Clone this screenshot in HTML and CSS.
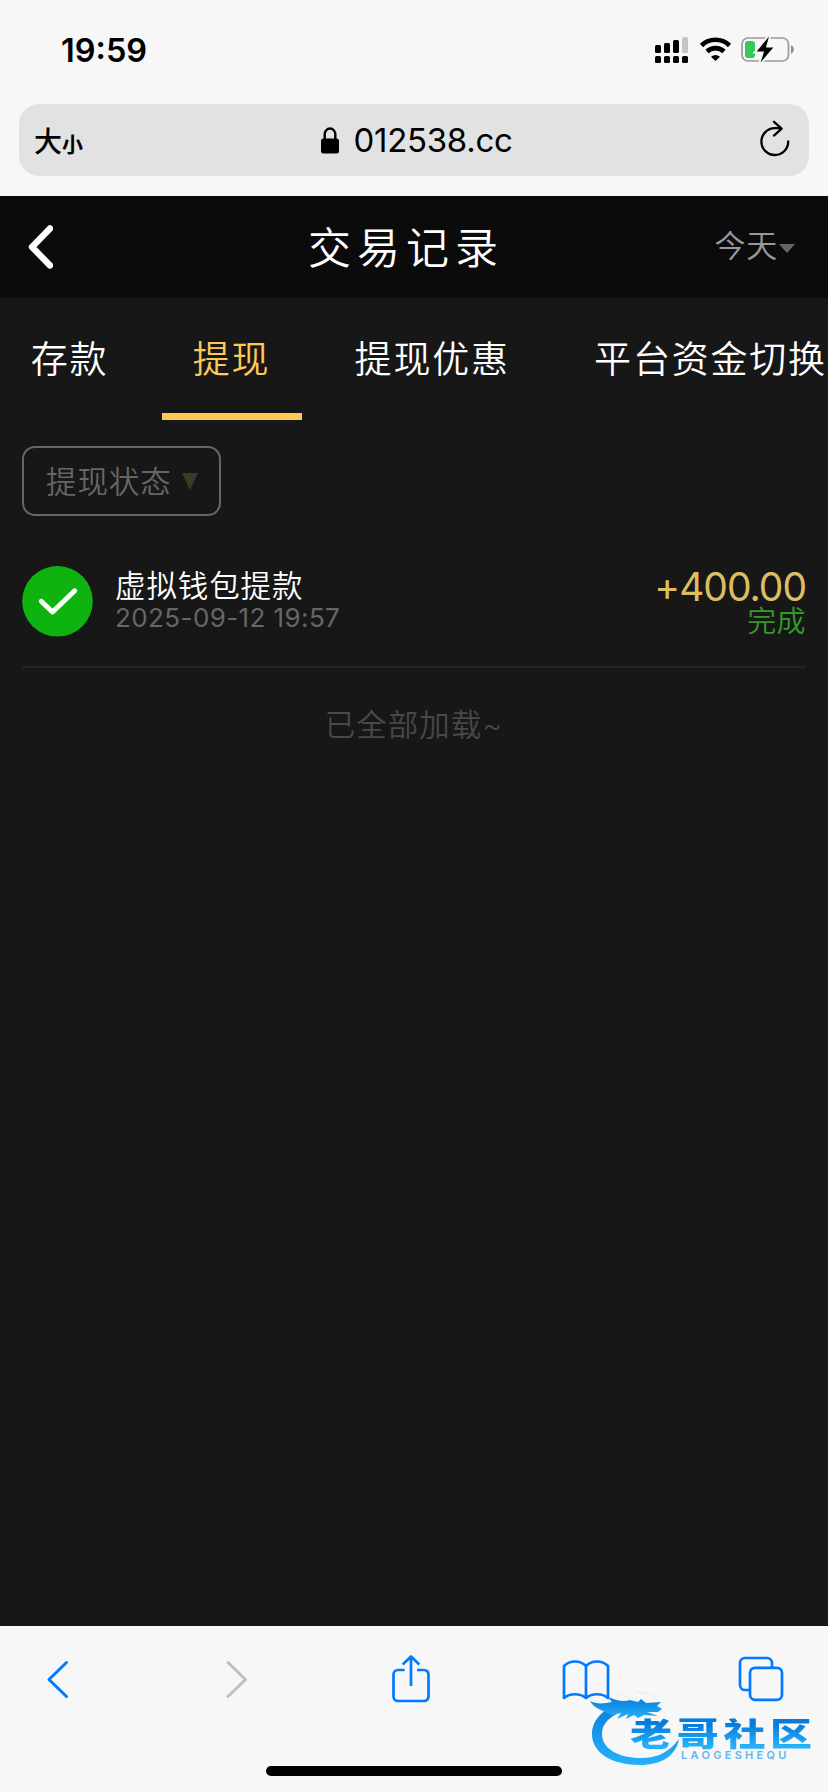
FILE: index.html
```
<!DOCTYPE html>
<html lang="zh-CN">
<head>
  <meta charset="UTF-8">
  <meta name="viewport" content="width=device-width, initial-scale=1.0">
  <title>交易记录</title>
  <link rel="stylesheet" href="styles.css">
</head>
<body>
  <div class="status-bar">
    <span class="time">19:59</span>
    <svg class="status-icons" width="144" height="30" viewBox="652 35 144 30">
      <!-- signal -->
      <g fill="#000">
        <rect x="655" y="45" width="6" height="8" rx="1.5"/>
        <rect x="664" y="43" width="6" height="10" rx="1.5"/>
        <rect x="673" y="40" width="6" height="13" rx="1.5"/>
        <rect x="682" y="37" width="6" height="16" rx="1.5" fill="#c5c5c5"/>
        <rect x="655" y="56" width="6" height="7" rx="1.5"/>
        <rect x="664" y="56" width="6" height="7" rx="1.5"/>
        <rect x="673" y="56" width="6" height="7" rx="1.5"/>
        <rect x="682" y="56" width="6" height="7" rx="1.5"/>
      </g>
      <!-- wifi -->
      <path d="M701.5 45.5a20 20 0 0 1 28 0M707 51.5a12.3 12.3 0 0 1 17 0" fill="none" stroke="#000" stroke-width="4.6"/>
      <path d="M711 56.8a7.2 7.2 0 0 1 9 0l-4.5 4.2z" fill="#000"/>
      <!-- battery -->
      <rect x="742" y="38" width="46.500" height="23" rx="6" fill="none" stroke="#9a9a9a" stroke-width="1.7"/>
      <path d="M791 45.200v8.600c3.800-1.600 3.800-7 0-8.600z" fill="#8c8c8c"/>
      <rect x="745" y="41" width="10" height="17" rx="3" fill="#34c759"/>
      <path d="M769 36.500l-12.300 15h7.400l-3.500 11 12.700-15h-7.400z" fill="#000" stroke="#f7f7f7" stroke-width="4" paint-order="stroke"/>
    </svg>
  </div>

  <div class="address-bar">
    <span class="text-size">大<small>小</small></span>
    <div class="url">
      <svg width="18" height="27" viewBox="0 0 18 27">
        <path d="M3.700 13V7.300a5.300 5.800 0 0 1 10.600 0V13" fill="none" stroke="#000" stroke-width="2.400"/>
        <rect x="0" y="11.500" width="18" height="15" rx="2.500"/>
      </svg>
      <span>012538.cc</span>
    </div>
    <svg class="reload" width="30" height="37" viewBox="0 0 30 37">
      <path d="M28.200 21.400A13.400 13.400 0 1 1 14.800 8.200H21M14 1.800L21.600 8.700 14 15.600" fill="none" stroke="#000" stroke-width="2.300" stroke-linecap="round" stroke-linejoin="round"/>
    </svg>
  </div>

  <header class="page-header">
    <svg class="back" width="26" height="46" viewBox="0 0 26 46">
      <path d="M23 4.500L5 23 23 41.500" fill="none" stroke="#fff" stroke-width="6.400" stroke-linecap="round" stroke-linejoin="round"/>
    </svg>
    <h1>交易记录</h1>
    <div class="date-filter">今天<i class="caret"></i></div>
  </header>

  <main class="content">
    <nav class="tabs">
      <a class="tab">存款</a>
      <a class="tab active">提现</a>
      <a class="tab">提现优惠</a>
      <a class="tab">平台资金切换</a>
    </nav>

    <button class="state-filter">提现状态<i class="caret"></i></button>

    <div class="record">
      <svg class="record-icon" width="71" height="71" viewBox="0 0 71 71">
        <circle cx="35.500" cy="35.300" r="35.300" fill="#0fb30f"/>
        <path d="M19.300 35.300L30.500 46 52.700 24.800" fill="none" stroke="#fff" stroke-width="5" stroke-linecap="round" stroke-linejoin="round"/>
      </svg>
      <div class="record-info">
        <div class="record-title">虚拟钱包提款</div>
        <div class="record-date">2025-09-12 19:57</div>
      </div>
      <div class="record-result">
        <div class="amount">+400.00</div>
        <div class="state">完成</div>
      </div>
    </div>

    <p class="all-loaded">已全部加载~</p>
  </main>

  <footer class="toolbar">
    <div class="toolbar-icons">
      <svg width="32" height="50" viewBox="0 0 32 50">
        <path d="M21.500 8.500L4 25.500l17.500 17" fill="none" stroke="#007aff" stroke-width="3" stroke-linecap="round" stroke-linejoin="round"/>
      </svg>
      <svg width="24" height="50" viewBox="0 0 24 50">
        <path d="M4 8.500L21.500 25.500 4 42.500" fill="none" stroke="#bfbfbf" stroke-width="3" stroke-linecap="round" stroke-linejoin="round"/>
      </svg>
      <svg width="38" height="50" viewBox="0 0 38 50">
        <path d="M12.700 16H6a4.500 4.500 0 0 0-4.500 4.500v22A4.500 4.500 0 0 0 6 47h26a4.500 4.500 0 0 0 4.500-4.500v-22A4.500 4.500 0 0 0 32 16h-7M19 32V3M10.700 10.500L19 2.500l8.300 8" fill="none" stroke="#007aff" stroke-width="2.700" stroke-linejoin="round"/>
      </svg>
      <svg width="48" height="50" viewBox="0 0 48 50">
        <path d="M24 12C18 6 8 6 2 12v32c6-5 16-5 22 0 6-5 16-5 22 0V12c-6-6-16-6-22 0v32" fill="none" stroke="#007aff" stroke-width="2.700" stroke-linejoin="round"/>
      </svg>
      <svg width="46" height="50" viewBox="0 0 46 50">
        <path d="M11.500 36H7a5 5 0 0 1-5-5V9a5 5 0 0 1 5-5h22a5 5 0 0 1 5 5v4.500" fill="none" stroke="#007aff" stroke-width="2.700"/>
        <rect x="12" y="13.800" width="32" height="32" rx="5" fill="none" stroke="#007aff" stroke-width="2.700"/>
      </svg>
    </div>
    <div class="home-indicator"></div>

    <div class="watermark">
      <svg width="110" height="80" viewBox="0 0 110 80">
        <defs>
          <linearGradient id="wave" x1="0" y1="0" x2="0" y2="1">
            <stop offset="0" stop-color="#087cdd"/>
            <stop offset="1" stop-color="#25b2fa"/>
          </linearGradient>
        </defs>
        <g fill="url(#wave)">
          <path d="M36 13C15 16 2 29 2 44c0 19 20 31 48 31 21 0 36-9 39-26-9 12-20 19-38 19-24 0-39-10-39-24 0-12 11-21 31-26z"/>
          <path d="M0 11c8 4 15 2 22 1l-4-5c9 4 16 5 22 3l8 2 3-3 5 4 15-1-4 4 5 3-4 3-11 0 11 4-14-1-6 3-4-3-8 4 2-5-11 5 4-6-9 2C11 20 4 18 0 11z"/>
        </g>
        <path d="M27 3c7 5 14 3 22 7M46 2c10 1 19 3 23 9" fill="none" stroke="#dfeff9" stroke-width="1"/>
      </svg>
      <div class="watermark-name">老哥社区</div>
      <div class="watermark-latin">LAOGESHEQU</div>
    </div>
  </footer>
</body>
</html>
```
FILE: styles.css
```
* {
  box-sizing: border-box;
}
body {
  margin: 0;
  height: 1792px;
  display: flex;
  flex-direction: column;
  overflow: hidden;
  background-color: #f7f7f7;
  font-family: Inter, "Noto Sans CJK SC", sans-serif;
}
svg {
  display: block;
  flex-shrink: 0;
}

/* Browser top */
.status-bar {
  height: 104px;
  padding: 0 32px 4px 61px;
  display: flex;
  align-items: center;
  justify-content: space-between;
}
.time {
  font-size: 32.5px;
  font-weight: 600;
}
.address-bar {
  height: 72px;
  margin: 0 19px 20px;
  padding: 0 19px 0 15px;
  display: grid;
  grid-template-columns: 60px 1fr 30px;
  align-items: center;
  border-radius: 20px;
  background-color: #e2e2e2;
}
.text-size {
  font-size: 28px;
  font-weight: 500;
  white-space: nowrap;
}
.text-size small {
  font-size: 21px;
  font-weight: 700;
}
.url {
  padding-right: 21px;
  display: flex;
  align-items: center;
  justify-content: center;
  gap: 15px;
  font-size: 33px;
  letter-spacing: -0.3px;
}
.reload {
  margin-top: -4px;
}

/* Page header */
.page-header {
  height: 102px;
  padding: 0 33px 0 27px;
  display: grid;
  grid-template-columns: 150px 1fr 150px;
  align-items: center;
  background-color: #0b0b0b;
  color: #fff;
}
.page-header h1 {
  margin: 0;
  padding: 0 10px 4px 0;
  text-align: center;
  font-size: 43px;
  font-weight: 350;
  letter-spacing: 6px;
}
.date-filter {
  padding-bottom: 8px;
  display: flex;
  align-items: center;
  justify-content: flex-end;
  font-size: 31px;
  font-weight: 350;
  letter-spacing: 0.8px;
  color: #999;
}
.caret {
  display: inline-block;
  border: 8px solid transparent;
  border-bottom: 0;
}
.date-filter .caret {
  margin: 11px 0 0 1px;
  border-top: 9px solid #666;
}

/* Records */
.content {
  flex: 1;
  background-color: #171717;
  color: #fff;
}
.tabs {
  height: 122px;
  display: flex;
  gap: 22px;
  overflow: hidden;
}
.tab {
  flex-shrink: 0;
  padding: 0 31.5px 0 30.8px;
  line-height: 123px;
  font-size: 37px;
  font-weight: 350;
  letter-spacing: 1.8px;
}
.tab.active {
  color: #ffc954;
  border-bottom: 7px solid #ffc954;
}
.state-filter {
  width: 199px;
  height: 70px;
  margin: 26px 0 0 22px;
  padding: 0 0 3px 22px;
  display: flex;
  align-items: center;
  border: 2px solid #666;
  border-radius: 13px;
  background: none;
  color: #666;
  font-family: inherit;
  font-size: 30.5px;
  font-weight: 350;
  letter-spacing: 0.9px;
}
.state-filter .caret {
  margin: 4px 0 0 10px;
  border-top: 17px solid #40392a;
}
.record {
  height: 102px;
  margin: 50px 22px 0;
  display: flex;
  border-bottom: 2px solid #232323;
}
.record-info {
  flex: 1;
  padding-left: 22px;
}
.record-title {
  line-height: 40px;
  font-size: 30.5px;
  font-weight: 350;
  letter-spacing: 0.9px;
}
.record-date {
  line-height: 24px;
  font-size: 26px;
  letter-spacing: 0.4px;
  color: #666;
}
.record-result {
  text-align: right;
}
.amount {
  line-height: 42px;
  font-size: 39px;
  letter-spacing: -1px;
  color: #dcbe62;
}
.state {
  line-height: 28px;
  font-size: 29px;
  font-weight: 350;
  letter-spacing: 0.4px;
  color: #339a26;
}
.all-loaded {
  margin: 35px 0 0;
  line-height: 44px;
  text-align: center;
  font-size: 30.5px;
  font-weight: 350;
  letter-spacing: 1px;
  color: #484848;
}

/* Browser bottom */
.toolbar {
  position: relative;
  height: 166px;
}
.toolbar-icons {
  width: 875px;
  margin-left: -27px;
  padding-top: 28px;
  display: grid;
  grid-template-columns: repeat(5, 175px);
  justify-items: center;
}
.home-indicator {
  width: 296px;
  height: 10px;
  margin: 62px auto 0;
  border-radius: 5px;
  background-color: #000;
}
.watermark {
  position: absolute;
  left: 590px;
  top: 64px;
  width: 226px;
  height: 84px;
}
.watermark-name {
  position: absolute;
  left: 40px;
  top: 24px;
  line-height: 40px;
  font-size: 42px;
  font-weight: 900;
  letter-spacing: 4.7px;
  white-space: nowrap;
  transform: scaleY(0.78);
  background: linear-gradient(#087cdd 20%, #25b2fa 90%);
  -webkit-background-clip: text;
  background-clip: text;
  color: transparent;
}
.watermark-latin {
  position: absolute;
  left: 91px;
  top: 58px;
  line-height: 14px;
  font-size: 11px;
  font-weight: 600;
  letter-spacing: 3.3px;
  color: #64b5ec;
}
```
